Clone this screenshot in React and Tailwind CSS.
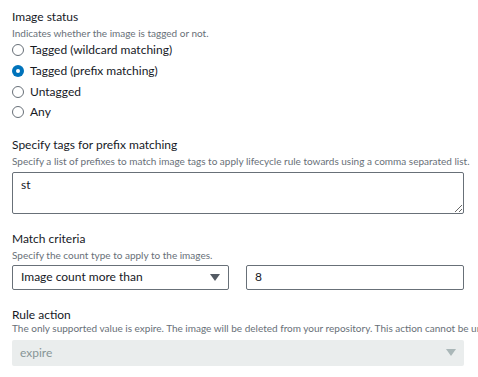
const Radio = ({ label, checked }) => (
  <label className="flex h-[20.7px] items-center gap-[6px]">
    {checked ? (
      <span className="flex h-[12px] w-[12px] items-center justify-center rounded-full bg-[#0073bb]">
        <span className="h-[4px] w-[4px] rounded-full bg-white" />
      </span>
    ) : (
      <span className="h-[12px] w-[12px] rounded-full border border-[#687078] bg-white" />
    )}
    <span className="text-[12px] text-[#16191f]">{label}</span>
  </label>
);

const Field = ({ label, hint, children, className = "", hintClass = "mt-[1px]" }) => (
  <div className={className}>
    <p className="text-[12px] leading-[16px] text-[#16191f]">{label}</p>
    <p className={`${hintClass} whitespace-nowrap text-[10px] leading-[14px] text-[#687078]`}>{hint}</p>
    {children}
  </div>
);

const Caret = ({ color }) => (
  <svg width="10" height="7" viewBox="0 0 10 7">
    <path d="M0 0 L10 0 L5 7 Z" fill={color} />
  </svg>
);

export default function App() {
  return (
    <div className="h-[377px] w-[478px] overflow-hidden bg-white px-[12px] pt-[9px] font-['Lato',sans-serif]">
      <Field label="Image status" hint="Indicates whether the image is tagged or not.">
        <div className="flex flex-col">
          <Radio label="Tagged (wildcard matching)" />
          <Radio label="Tagged (prefix matching)" checked />
          <Radio label="Untagged" />
          <Radio label="Any" />
        </div>
      </Field>

      <Field
        className="mt-[14px]"
        label="Specify tags for prefix matching"
        hint="Specify a list of prefixes to match image tags to apply lifecycle rule towards using a comma separated list."
      >
        <textarea
          defaultValue="st"
          className="mt-[4px] block h-[42px] w-[452px] rounded-[2px] border border-[#687078] px-[8px] py-[3px] text-[12px] text-[#16191f] outline-none"
        />
      </Field>

      <Field
        className="mt-[17px]"
        label="Match criteria"
        hint="Specify the count type to apply to the images."
      >
        <div className="mt-[3px] flex gap-[17px]">
          <div className="flex h-[25px] w-[217px] items-center justify-between rounded-[2px] border border-[#687078] pl-[8px] pr-[8px] text-[12px] text-[#16191f]">
            <span>Image count more than</span>
            <Caret color="#545b64" />
          </div>
          <div className="flex h-[25px] w-[218px] items-center rounded-[2px] border border-[#687078] px-[8px] text-[12px] text-[#16191f]">
            8
          </div>
        </div>
      </Field>

      <Field
        className="mt-[17px]"
        hintClass="-mt-[2px]"
        label="Rule action"
        hint="The only supported value is expire. The image will be deleted from your repository. This action cannot be undone."
      >
        <div className="mt-[5px] flex h-[26px] w-[452px] items-center justify-between rounded-[2px] bg-[#eaeded] pl-[8px] pr-[8px] text-[12px] text-[#879596]">
          <span>expire</span>
          <Caret color="#aab7b8" />
        </div>
      </Field>
    </div>
  );
}
